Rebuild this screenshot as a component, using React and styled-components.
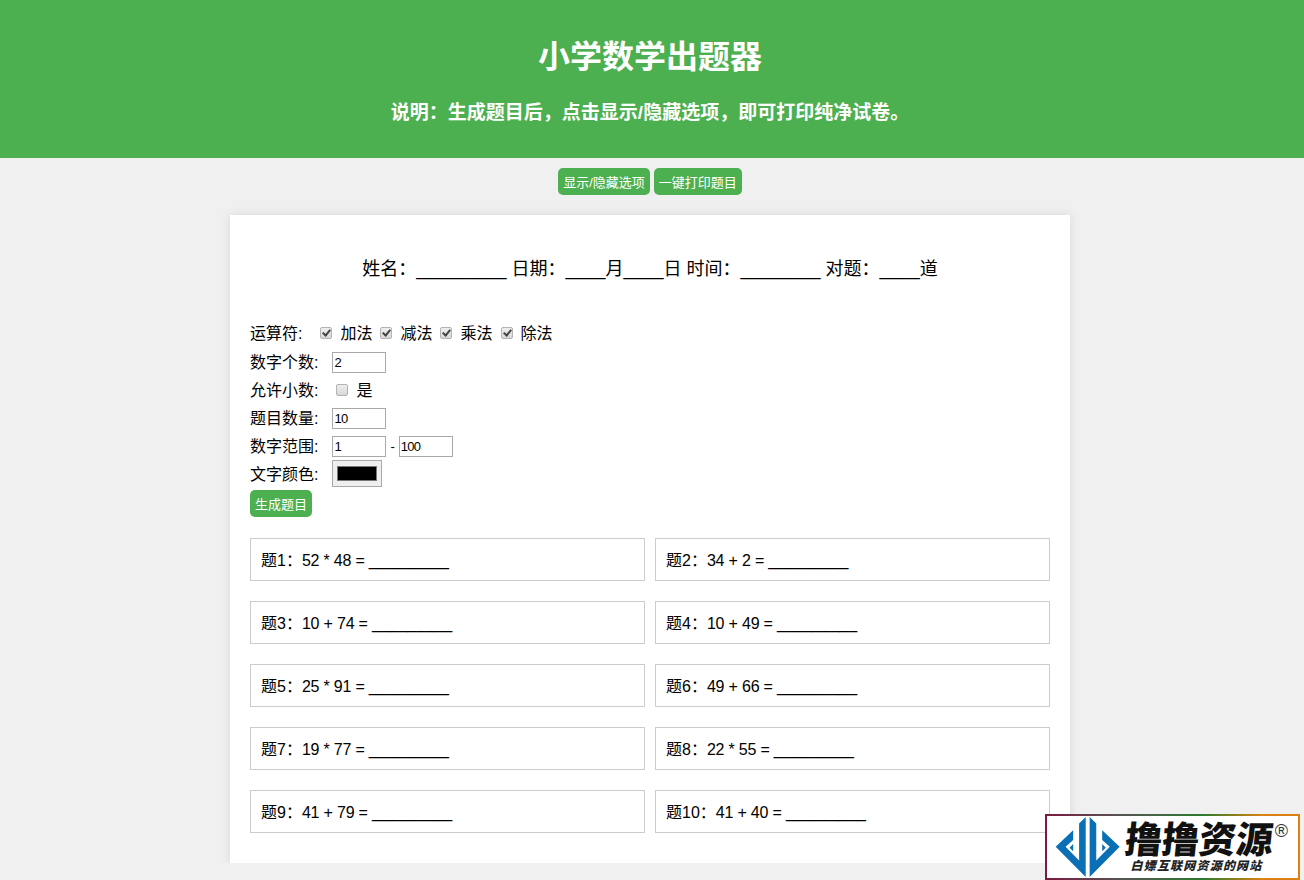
import styled, { createGlobalStyle } from 'styled-components';

const cjk = `"Liberation Sans", "Noto Sans CJK SC", sans-serif`;

const GlobalStyle = createGlobalStyle`
    body {
        margin: 0;
        background-color: #f0f0f0;
        font-family: ${cjk};
        color: #000;
    }
`
const Header = styled.header`
    box-sizing: border-box;
    height: 158px;
    padding-right: 4px;
    background-color: #4caf50;
    color: #fff;
    display: flex;
    flex-direction: column;
    align-items: center;
`
const Title = styled.h1`
    margin: 37px 0 0;
    font-size: 32px;
    line-height: 40px;
    font-weight: bold;
`
const Subtitle = styled.h3`
    margin: 24px 0 0;
    font-size: 19px;
    line-height: 24px;
    font-weight: bold;
`
const Toolbar = styled.div`
    display: flex;
    justify-content: center;
    gap: 4px;
    margin-top: 10px;
    padding-right: 4px;
`
const Button = styled.button`
    height: 27px;
    padding: 0 5px;
    border: none;
    border-radius: 5px;
    background-color: #4caf50;
    color: #fff;
    font-family: ${cjk};
    font-size: 13px;
    cursor: pointer;
`
const Paper = styled.main`
    width: 800px;
    margin: 20px 0 0 230px;
    padding: 20px 20px 30px;
    background-color: #fff;
    box-shadow: 0 0 10px rgba(0, 0, 0, 0.1);
`
const InfoLine = styled.p`
    margin: 23px 0 0;
    height: 22px;
    font-size: 18px;
    line-height: 22px;
    text-align: center;
`
const Options = styled.form`
    margin-top: 40px;
    display: flex;
    flex-direction: column;
    align-items: flex-start;
`
const Row = styled.div`
    display: flex;
    align-items: ${props => props.$align || 'center'};
    height: ${props => props.$height || 28}px;
    margin-top: ${props => props.$top || 0}px;
    font-size: 16px;
`
const Label = styled.label`
    margin: 0 ${props => props.$gap || 14}px 2px 0;
`
const NumberInput = styled.input`
    box-sizing: border-box;
    width: 54px;
    height: 21px;
    padding: 1px;
    border: 1px solid #a9a9a9;
    font-family: "Liberation Sans", sans-serif;
    font-size: 13px;
    letter-spacing: -0.8px;
    color: #000;
`
const Dash = styled.span`
    margin: 0 4px;
    font-size: 13px;
`
const Check = styled.input`
    appearance: none;
    position: relative;
    box-sizing: border-box;
    width: 12px;
    height: 12px;
    margin: 0 8px 0 ${props => props.$left || 0}px;
    border: 1px solid #b4b4b4;
    border-radius: 2px;
    background: linear-gradient(#eeeeee, #d8d8d8);

    &:checked::after {
        content: '';
        position: absolute;
        left: 3px;
        top: 0;
        width: 3px;
        height: 6px;
        border: solid #444;
        border-width: 0 2px 2px 0;
        transform: rotate(40deg);
    }
`
const CheckText = styled.span`
    margin: 0 8px 2px 0;
`
const ColorInput = styled.input`
    box-sizing: border-box;
    width: 50px;
    height: 27px;
    padding: 1px 2px;
    border: 1px solid #a9a9a9;
    background-color: #efefef;
`
const GenerateButton = styled(Button)`
    margin-top: 3px;
`
const Problems = styled.div`
    display: grid;
    grid-template-columns: 395px 395px;
    column-gap: 10px;
    row-gap: 20px;
    margin-top: 21px;
`
const Problem = styled.div`
    box-sizing: border-box;
    height: 43px;
    padding: 1px 10px 0;
    border: 1px solid #ccc;
    font-size: 16px;
    line-height: 41px;
    white-space: pre;
`
const Equation = styled.span`
    letter-spacing: -0.2px;
`
const Blank = styled.span`
    letter-spacing: 0;
`
const Watermark = styled.aside`
    position: fixed;
    right: 4px;
    bottom: 0;
    box-sizing: border-box;
    width: 255px;
    height: 66px;
    padding: 2px;
    background: linear-gradient(90deg, #7a1a3f 0%, #555 30%, #2d7a2d 62%, #d9820f 85%);
`
const WatermarkInner = styled.div`
    position: relative;
    height: 100%;
    background-color: #fff;
    display: flex;
    align-items: center;
    padding-left: 7px;
`
const BrandText = styled.div`
    display: flex;
    flex-direction: column;
    align-items: center;
    margin-left: 3px;
`
const BrandName = styled.div`
    font-size: 37px;
    line-height: 38px;
    font-weight: 900;
    color: #111;
    transform: skewX(-6deg);
`
const BrandSlogan = styled.div`
    margin-right: 5px;
    font-size: 12px;
    line-height: 13px;
    font-weight: 900;
    font-style: italic;
    color: #222;
    letter-spacing: 1.2px;
`
const Registered = styled.span`
    position: absolute;
    right: 10px;
    top: 7px;
    font-size: 18px;
    line-height: 16px;
    color: #333;
`

const LogoMark = () => (
  <svg width="68" height="62" viewBox="18 12 204 188">
    <path fill="#0a6fb5" d="M22 105 L75 55 L75 85 L52 105 L93 147 L93 35 L113 15 L113 197 Z" />
    <path fill="#0a6fb5" d="M75 97 L64 108 L75 119 Z" />
    <path fill="#0a6fb5" d="M216 105 L163 55 L163 85 L186 105 L145 147 L145 35 L125 15 L125 197 Z" />
    <path fill="#0a6fb5" d="M163 97 L174 108 L163 119 Z" />
  </svg>
)

const problems = [
  ['题1：', '52 * 48 = '],
  ['题2：', '34 + 2 = '],
  ['题3：', '10 + 74 = '],
  ['题4：', '10 + 49 = '],
  ['题5：', '25 * 91 = '],
  ['题6：', '49 + 66 = '],
  ['题7：', '19 * 77 = '],
  ['题8：', '22 * 55 = '],
  ['题9：', '41 + 79 = '],
  ['题10：', '41 + 40 = '],
]

const App = () => {
  return (
    <>
      <GlobalStyle />
      <Header>
        <Title>小学数学出题器</Title>
        <Subtitle>说明：生成题目后，点击显示/隐藏选项，即可打印纯净试卷。</Subtitle>
      </Header>
      <Toolbar>
        <Button type="button">显示/隐藏选项</Button>
        <Button type="button">一键打印题目</Button>
      </Toolbar>
      <Paper>
        <InfoLine>姓名：_________ 日期：____月____日 时间：________ 对题：____道</InfoLine>
        <Options>
          <Row $height={26}>
            <Label $gap={18}>运算符:</Label>
            <Check type="checkbox" defaultChecked /><CheckText>加法</CheckText>
            <Check type="checkbox" defaultChecked /><CheckText>减法</CheckText>
            <Check type="checkbox" defaultChecked /><CheckText>乘法</CheckText>
            <Check type="checkbox" defaultChecked /><CheckText>除法</CheckText>
          </Row>
          <Row $top={2}>
            <Label>数字个数:</Label>
            <NumberInput type="number" defaultValue="2" />
          </Row>
          <Row>
            <Label>允许小数:</Label>
            <Check type="checkbox" $left={4} /><CheckText>是</CheckText>
          </Row>
          <Row>
            <Label>题目数量:</Label>
            <NumberInput type="number" defaultValue="10" />
          </Row>
          <Row>
            <Label>数字范围:</Label>
            <NumberInput type="number" defaultValue="1" />
            <Dash>-</Dash>
            <NumberInput type="number" defaultValue="100" />
          </Row>
          <Row $height={27} $align="flex-end">
            <Label>文字颜色:</Label>
            <ColorInput type="color" defaultValue="#000000" />
          </Row>
          <GenerateButton type="button">生成题目</GenerateButton>
        </Options>
        <Problems>
          {problems.map(([label, equation]) => (
            <Problem key={label}>{label}<Equation>{equation}<Blank>_________</Blank></Equation></Problem>
          ))}
        </Problems>
      </Paper>
      <Watermark>
        <WatermarkInner>
          <LogoMark />
          <BrandText>
            <BrandName>撸撸资源</BrandName>
            <BrandSlogan>白嫖互联网资源的网站</BrandSlogan>
          </BrandText>
          <Registered>®</Registered>
        </WatermarkInner>
      </Watermark>
    </>
  )
}

export default App
